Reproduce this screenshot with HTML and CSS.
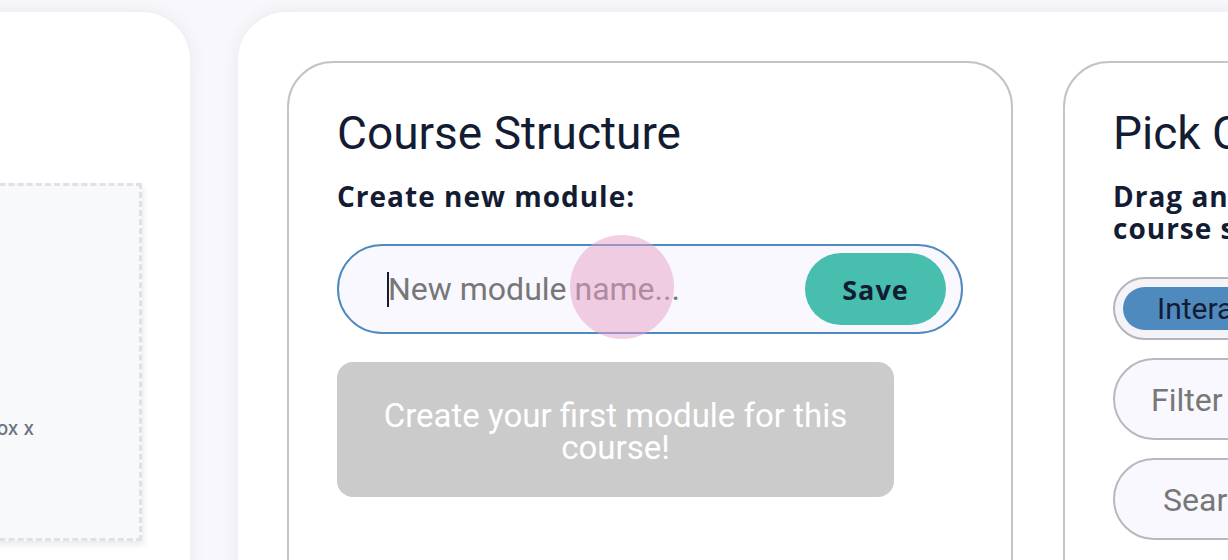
FILE: index.html
```html
<!DOCTYPE html>
<html lang="en">
<head>
<meta charset="utf-8">
<title>Course Structure</title>
<link rel="stylesheet" href="styles.css">
</head>
<body>
<div class="board">
  <section class="card card-side">
    <div class="dropzone">
      <p class="dropzone-text">Drop content into box x</p>
    </div>
  </section>
  <section class="card card-main">
    <div class="panel">
      <h2 class="panel-title">Course Structure</h2>
      <h3 class="panel-sub">Create new module:</h3>
      <form class="module-form">
        <span class="caret"></span>
        <span class="placeholder">New module name...</span>
        <button type="button" class="save-btn">Save</button>
      </form>
      <div class="empty-state">Create your first module for this course!</div>
    </div>
    <div class="panel">
      <h2 class="panel-title">Pick Content</h2>
      <h3 class="panel-sub panel-sub-narrow">Drag and drop content to the course structure:</h3>
      <div class="toggle"><span class="toggle-on">Interactive</span><span class="toggle-off">Static</span></div>
      <div class="field field-filter">Filter by type</div>
      <div class="field field-search">Search...</div>
    </div>
  </section>
</div>
<div class="touch"></div>
</body>
</html>
```
FILE: styles.css
```css
html, body {
  margin: 0;
  padding: 0;
  background: #f8f8fc;
  overflow: hidden;
  width: 1228px;
  height: 560px;
  font-family: Roboto, "Noto Sans", sans-serif;
  color: #141c33;
}

.board {
  display: flex;
  gap: 48px;
  padding-top: 12px;
  margin-left: -210px;
  width: 2400px;
}

.card {
  background: #ffffff;
  border-radius: 48px;
  box-shadow: 0 0 18px rgba(20, 20, 60, 0.08);
  height: 640px;
  box-sizing: border-box;
  flex: none;
}

.card-side {
  width: 400px;
  padding: 171px 48px 0 0;
}

.dropzone {
  height: 358px;
  box-sizing: border-box;
  background: #f8f9fb;
  border: 3px dashed #dfe1e7;
  box-shadow: 2px 4px 6px rgba(0, 0, 0, 0.08);
  display: flex;
  align-items: center;
  justify-content: flex-end;
  padding: 132px 105px 0 0;
}

.dropzone-text {
  margin: 0;
  font-family: Inter, "Liberation Sans", sans-serif;
  font-size: 19px;
  font-weight: 500;
  color: #6b7280;
}

.card-main {
  display: flex;
  gap: 50px;
  padding: 49px;
  width: 1700px;
}

.panel {
  width: 726px;
  height: 600px;
  box-sizing: border-box;
  border: 2px solid #c4c4c4;
  border-radius: 46px;
  padding: 42px 48px;
  flex: none;
}

.panel-title {
  margin: 0;
  font-size: 46px;
  font-weight: 400;
  line-height: 56px;
  color: #141c33;
}

.panel-sub {
  margin: 19px 0 0;
  font-family: "Open Sans", Roboto, sans-serif;
  font-size: 28px;
  font-weight: 700;
  line-height: 32px;
  letter-spacing: 1px;
  color: #141c33;
}

.panel-sub-narrow {
  max-width: 540px;
}

.module-form {
  margin: 32px 0 0;
  width: 626px;
  height: 90px;
  box-sizing: border-box;
  border: 2px solid #4f8abf;
  border-radius: 45px;
  background: #f9f8fe;
  display: flex;
  align-items: center;
  padding: 0 15px 0 48px;
}

.caret {
  width: 2px;
  height: 35px;
  background: #141c33;
}

.placeholder {
  font-size: 32px;
  color: #777777;
  flex: 1;
  margin-left: -1px;
}

.save-btn {
  width: 141px;
  height: 72px;
  border: none;
  border-radius: 36px;
  background: #48bfae;
  font-family: "Open Sans", Roboto, sans-serif;
  font-size: 27px;
  font-weight: 700;
  letter-spacing: 1px;
  color: #141c33;
}

.empty-state {
  margin-top: 28px;
  width: 557px;
  height: 135px;
  box-sizing: border-box;
  background: #cbcbcb;
  border-radius: 16px;
  color: #ffffff;
  font-size: 33px;
  line-height: 32px;
  text-align: center;
  padding: 38px 36px 0;
}

.toggle {
  margin-top: 33px;
  display: flex;
  width: 560px;
  height: 63px;
  box-sizing: border-box;
  border: 2px solid #b4b4bc;
  border-radius: 32px;
  background: #f3f3f8;
  padding: 8px;
  gap: 8px;
}

.toggle-on {
  background: #4f8abf;
  border-radius: 22px;
  padding: 0 34px;
  font-size: 30px;
  line-height: 44px;
  color: #141c33;
}

.toggle-off {
  padding: 0 24px;
  font-size: 30px;
  line-height: 44px;
  color: #141c33;
}

.field {
  margin-top: 18px;
  width: 560px;
  height: 82px;
  box-sizing: border-box;
  border: 2px solid #b8b8c0;
  border-radius: 41px;
  background: #f9f8fe;
  font-size: 32px;
  line-height: 80px;
  color: #777777;
}

.field-filter { padding-left: 36px; }
.field-search { padding-left: 48px; }

.touch {
  position: absolute;
  left: 570px;
  top: 235px;
  width: 104px;
  height: 104px;
  border-radius: 50%;
  background: rgba(232, 160, 200, 0.5);
  pointer-events: none;
}
```
